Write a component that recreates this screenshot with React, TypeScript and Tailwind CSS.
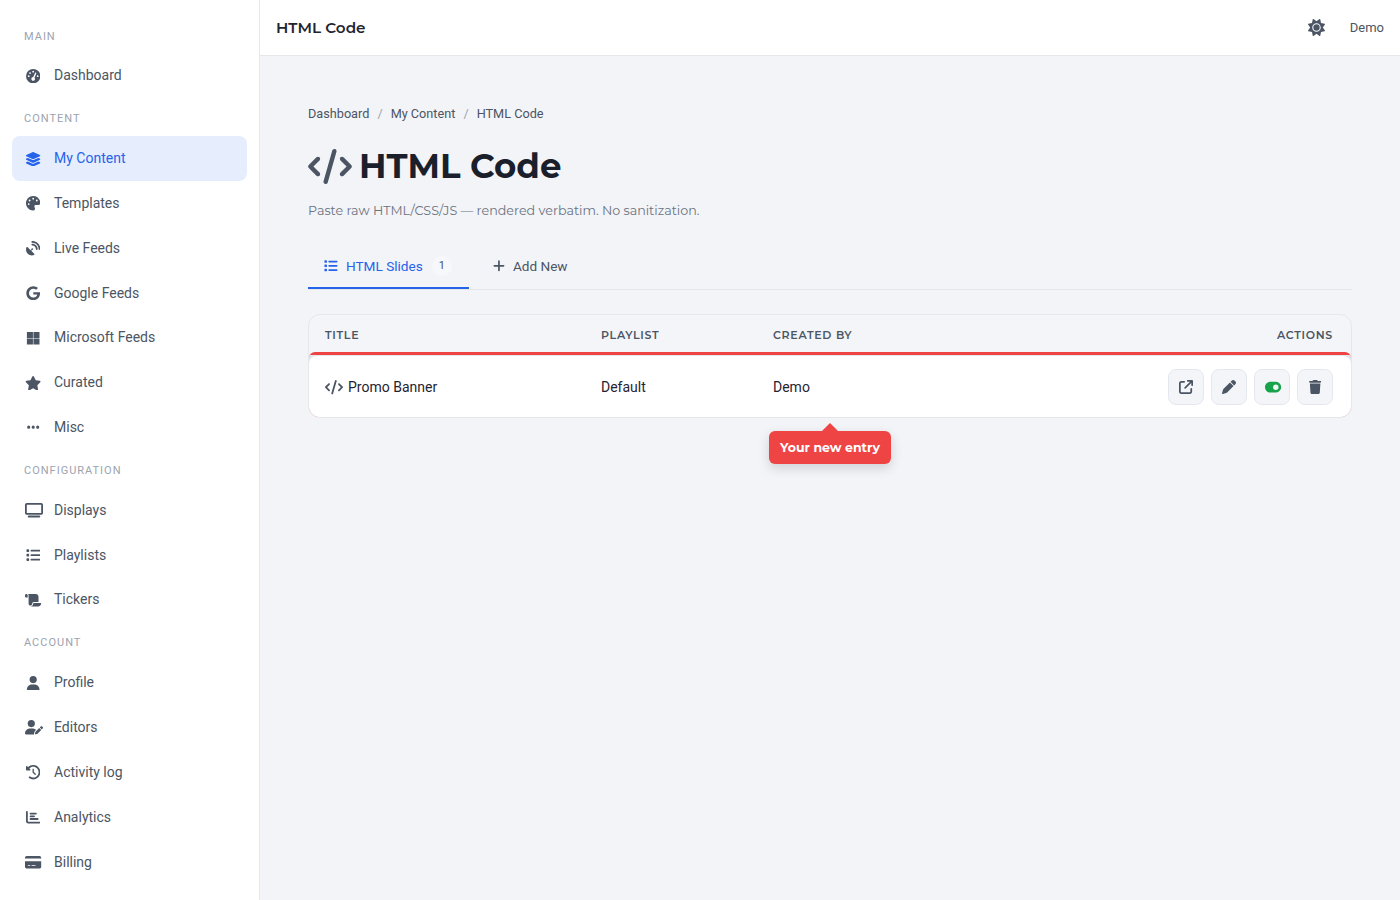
import type { ReactNode } from 'react';
import {
  FaArrowUpRightFromSquare,
  FaChartBar,
  FaClockRotateLeft,
  FaCode,
  FaCreditCard,
  FaEllipsis,
  FaGoogle,
  FaLayerGroup,
  FaList,
  FaMicrosoft,
  FaPalette,
  FaPen,
  FaPlus,
  FaSatelliteDish,
  FaScroll,
  FaStar,
  FaSun,
  FaGaugeHigh,
  FaToggleOn,
  FaTrash,
  FaTv,
  FaUser,
  FaUserPen,
  FaUserShield,
} from 'react-icons/fa6';

// react-icons forces a square box, wide glyphs need their real width
const navIcon = 'h-[14.4px] w-[14.4px] shrink-0';
const navIconWide = 'ml-px h-[14.4px] w-[16.2px] shrink-0';
const navIconWider = 'ml-px h-[14.4px] w-[18px] shrink-0';

const sections = [
  { label: 'Main', items: [{ name: 'Dashboard', icon: <FaGaugeHigh className={navIcon} /> }] },
  {
    label: 'Content',
    items: [
      { name: 'My Content', icon: <FaLayerGroup className={navIconWide} />, active: true },
      { name: 'Templates', icon: <FaPalette className={navIcon} /> },
      { name: 'Live Feeds', icon: <FaSatelliteDish className={navIcon} /> },
      { name: 'Google Feeds', icon: <FaGoogle className={navIcon} /> },
      { name: 'Microsoft Feeds', icon: <FaMicrosoft className={navIcon} /> },
      { name: 'Curated', icon: <FaStar className={navIconWide} /> },
      { name: 'Misc', icon: <FaEllipsis className={navIcon} /> },
    ],
  },
  {
    label: 'Configuration',
    items: [
      { name: 'Displays', icon: <FaTv className={navIconWider} /> },
      { name: 'Playlists', icon: <FaList className={navIcon} /> },
      { name: 'Tickers', icon: <FaScroll className={navIconWide} /> },
    ],
  },
  {
    label: 'Account',
    items: [
      { name: 'Profile', icon: <FaUser className={navIcon} /> },
      { name: 'Editors', icon: <FaUserPen className={navIconWider} /> },
      { name: 'Activity log', icon: <FaClockRotateLeft className={navIcon} /> },
      { name: 'Analytics', icon: <FaChartBar className={navIcon} /> },
      { name: 'Billing', icon: <FaCreditCard className={navIconWide} /> },
      // last row is cut by the window, only the top of its icon shows
      { name: '', icon: <FaUserShield className={navIconWider} /> },
    ],
  },
];

function ActionButton({ children }: { children: ReactNode }) {
  return (
    <button className="flex h-9 w-9 items-center justify-center rounded-lg border border-[#e4e7ee] bg-[#f4f5f9] text-[#4b5563]">
      {children}
    </button>
  );
}

export default function App() {
  return (
    <div className="flex h-[900px] overflow-hidden bg-[#f3f4f8] font-['Roboto',sans-serif] text-[14px] text-[#1f2430]">
      <aside className="h-full w-[260px] shrink-0 overflow-hidden border-r border-[#e5e7eb] bg-white px-3 pt-[15.35px]">
        {sections.map((section) => (
          <div key={section.label}>
            <div
              className={
                section.label === 'Main'
                  ? 'px-3 pb-2 pt-[13.5px] text-[11px] uppercase leading-[16.6px] tracking-[1px] text-[#9ca3af]'
                  : 'px-3 pb-[8.5px] pt-[13px] text-[11px] uppercase leading-[16.6px] tracking-[1px] text-[#9ca3af]'
              }
            >
              {section.label}
            </div>
            {section.items.map((item, i) => (
              <div
                key={i}
                className={
                  item.active
                    ? 'flex h-[44.8px] items-center gap-3 rounded-lg bg-[#e6eefd] px-3 text-[#2563eb]'
                    : 'flex h-[44.8px] items-center gap-3 rounded-lg px-3 text-[#4b5563]'
                }
              >
                <span className="flex w-[18px] justify-center">{item.icon}</span>
                <span>{item.name}</span>
              </div>
            ))}
          </div>
        ))}
      </aside>

      <div className="flex min-w-0 flex-1 flex-col">
        <header className="flex h-14 shrink-0 items-center justify-between border-b border-[#e5e7eb] bg-white pl-4 pr-4">
          <div className="pt-[2px] font-['Montserrat',sans-serif] text-[15.2px] font-semibold text-[#1f2430]">HTML Code</div>
          <div className="flex items-center gap-[25px]">
            <FaSun className="h-[17px] w-[17px] text-[#4b5563]" />
            <span className="text-[13px] text-[#4b5563]">Demo</span>
          </div>
        </header>

        <main className="px-12 pt-12">
          <nav className="flex items-center gap-2 text-[12.7px] leading-5 text-[#4b5563]">
            <span>Dashboard</span>
            <span className="text-[#9ca3af]">/</span>
            <span>My Content</span>
            <span className="text-[#9ca3af]">/</span>
            <span>HTML Code</span>
          </nav>

          <h1 className="mt-5 flex h-[44px] items-center gap-[7px] font-['Montserrat',sans-serif] text-[34px] font-bold text-[#1a1f2b]">
            <FaCode className="h-[35px] w-[44px] text-[#4b5563]" />
            <span>HTML Code</span>
          </h1>
          <p className="mt-[13px] font-['Montserrat',sans-serif] text-[12.7px] leading-5 text-[#6b7280]">
            Paste raw HTML/CSS/JS — rendered verbatim. No sanitization.
          </p>

          <div className="mt-[22px] flex h-[47px] border-b border-[#e5e7eb] text-[13.6px]">
            <div className="flex h-[46px] w-[161px] items-center gap-2 border-b-2 border-[#2563eb] pl-4 pt-[2px] text-[#2563eb]">
              <FaList className="h-[13.6px] w-[13.6px] shrink-0" />
              <span className="ml-[0.4px]">HTML Slides</span>
              <span className="ml-px flex h-5 w-5 items-center justify-center rounded-full bg-[#f7f8fb] text-[11px] text-[#4b5563]">1</span>
            </div>
            <div className="flex h-[46px] items-center gap-2 pl-6 text-[#4b5563]">
              <FaPlus className="h-[13.6px] w-[11.9px] shrink-0" />
              <span>Add New</span>
            </div>
          </div>

          <div className="relative mt-6 rounded-xl border border-[#e5e7eb] bg-[#f4f5f9]">
            <div className="grid h-[37px] grid-cols-[276px_172px_1fr_auto] items-center pl-4 pr-[18px] pt-1 font-['Montserrat',sans-serif] text-[11px] font-semibold uppercase tracking-[0.7px] text-[#4b5563]">
              <span>Title</span>
              <span>Playlist</span>
              <span>Created by</span>
              <span>Actions</span>
            </div>
            <div className="overflow-hidden rounded-b-[11px] rounded-t-[6px] bg-[#ef4444] pt-[3px]">
              <div className="bg-[#e5e7eb] pt-px">
                <div className="grid h-[61px] grid-cols-[276px_172px_1fr_auto] items-center rounded-t-[8px] bg-white pl-4 pr-[18px]">
                  <span className="mt-[2px] flex items-center gap-[5px] text-[#1f2430]">
                    <FaCode className="h-[14.4px] w-[18px] text-[#4b5563]" />
                    Promo Banner
                  </span>
                  <span className="mt-[2px]">Default</span>
                  <span className="mt-[2px]">Demo</span>
                  <div className="flex gap-[7px]">
                    <ActionButton><FaArrowUpRightFromSquare className="h-[14px] w-[14px]" /></ActionButton>
                    <ActionButton><FaPen className="h-[14px] w-[14px]" /></ActionButton>
                    <ActionButton><FaToggleOn className="ml-[2px] mt-px h-[14.4px] w-[16.2px] text-[#16a34a]" /></ActionButton>
                    <ActionButton><FaTrash className="h-[14px] w-[12.25px]" /></ActionButton>
                  </div>
                </div>
              </div>
            </div>

            <div className="absolute left-[460px] top-[116px] rounded-md bg-[#ef4444] px-[11px] py-[7px] font-['Montserrat',sans-serif] text-[12.5px] font-bold leading-[19px] text-white shadow-[0_4px_12px_rgba(0,0,0,0.15)]">
              <div className="absolute left-1/2 top-[-8px] h-0 w-0 -translate-x-1/2 border-x-[8px] border-b-[8px] border-x-transparent border-b-[#ef4444]" />
              Your new entry
            </div>
          </div>
        </main>
      </div>
    </div>
  );
}
